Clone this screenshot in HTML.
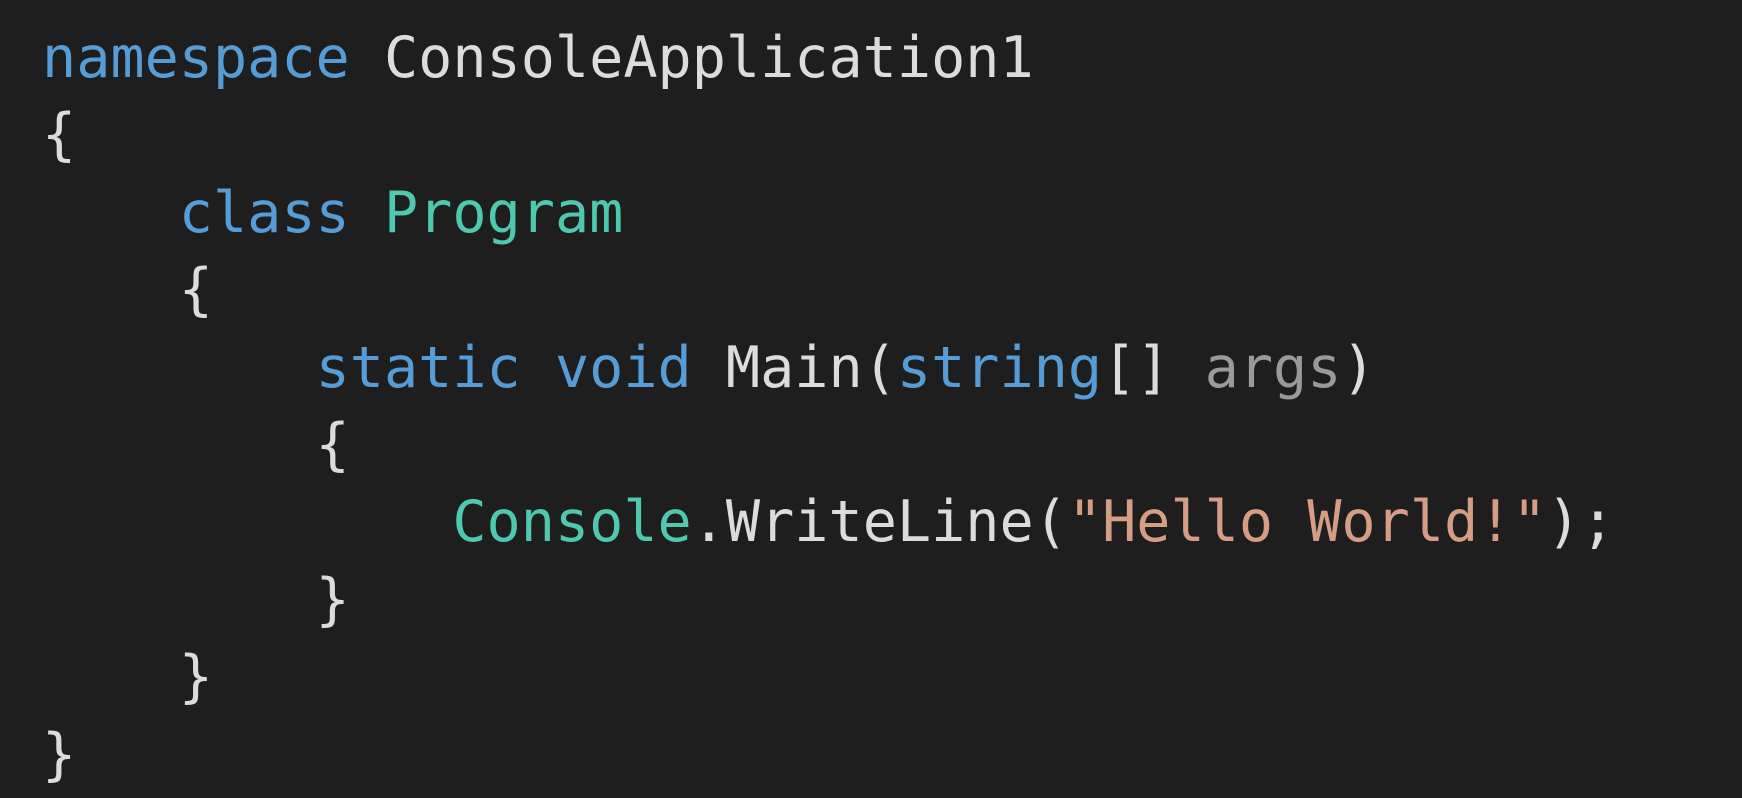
<!DOCTYPE html>
<html><head><meta charset="utf-8"><style>
html,body{margin:0;padding:0;background:#1e1e1e;width:1742px;height:798px;overflow:hidden}
pre{margin:0;padding:20px 0 0 42px;font-family:"DejaVu Sans Mono","Liberation Mono",monospace;font-size:56.8px;line-height:77.4px;color:#dcdcdc}
.k{color:#569cd6}.t{color:#4ec9b0}.s{color:#d69d85}.g{color:#9a9a9a}
</style></head><body><pre><span class="k">namespace</span> ConsoleApplication1
{
    <span class="k">class</span> <span class="t">Program</span>
    {
        <span class="k">static</span> <span class="k">void</span> Main(<span class="k">string</span>[] <span class="g">args</span>)
        {
            <span class="t">Console</span>.WriteLine(<span class="s">"Hello World!"</span>);
        }
    }
}</pre></body></html>
